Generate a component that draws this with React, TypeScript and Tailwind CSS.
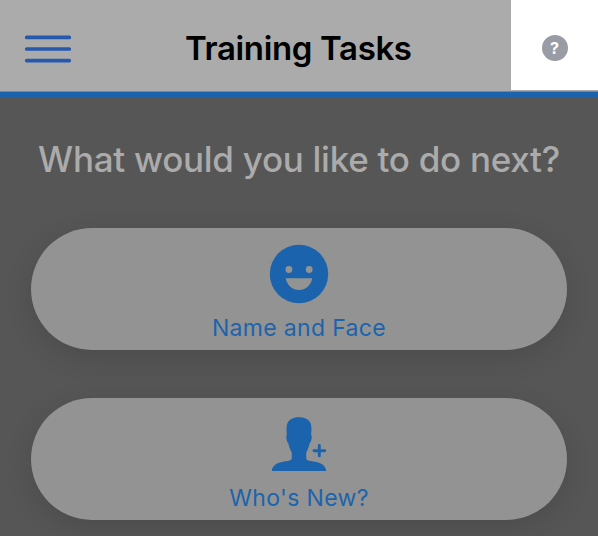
import type { ReactNode } from "react";

function MenuIcon() {
  return (
    <svg width="48" height="30" viewBox="0 0 48 30" stroke="#2658ad" strokeWidth="3.7" strokeLinecap="round">
      <path d="M2.7 3.4H45.3M2.7 15H45.3M2.7 26.6H45.3" />
    </svg>
  );
}

function SmileIcon() {
  return (
    <svg width="60" height="60" viewBox="0 0 60 60">
      <circle cx="30" cy="30" r="29.2" fill="#1b64ad" />
      <circle cx="19.9" cy="25.5" r="3.4" fill="#939393" />
      <circle cx="40.2" cy="25.5" r="3.4" fill="#939393" />
      <path d="M17.4 34.3H42.6Q43.4 34.3 43.1 35.3C41.5 41.7 36.5 46 30 46S18.500 41.700 16.900 35.300Q16.600 34.300 17.400 34.300Z" fill="#939393" />
    </svg>
  );
}

function AddPersonIcon() {
  return (
    <svg width="56" height="56" viewBox="0 0 56 56" fill="#1b64ad">
      <path d="M1 55V53.500C2 49 7 46.300 13 45.500C18 44.800 20.800 44.500 20.800 42V36.500C19 33.500 18 30 17.300 27.300C15.900 26 15 22 15.300 20C15.400 19.300 15.700 18.900 16 18.700C15.300 15 15.300 9 16.800 6.500C19 2.700 23 1.200 28 1.200S37 2.700 39.200 6.500C40.700 9 40.700 15 40 18.700C40.300 18.900 40.600 19.300 40.700 20C41 22 40.100 26 38.700 27.300C38 30 37 33.500 35.200 36.500V42C35.200 44.500 38 44.800 43 45.500C49 46.300 54 49 55 53.500V55Z" />
      <path d="M48.300 29.500V39.900M43 34.800H53.700" stroke="#1b64ad" strokeWidth="2.900" strokeLinecap="round" />
    </svg>
  );
}

function TaskButton({ icon, label }: { icon: ReactNode; label: ReactNode }) {
  return (
    <button className="flex h-[122px] w-[536px] shrink-0 flex-col items-center rounded-[61px] bg-[#939393] pt-4 text-[#1b64ad] shadow-[0_8px_28px_rgba(0,0,0,0.12)]">
      <span className="flex h-[60px] items-center">{icon}</span>
      {label}
    </button>
  );
}

export default function App() {
  return (
    <div className="flex h-[536px] w-[598px] flex-col overflow-hidden bg-[#565656] font-['Inter',sans-serif]">
      <header className="flex h-[98px] shrink-0 border-b-[6px] border-[#1b64ad] bg-[#ababab]">
        <div className="flex h-[92px] flex-1 items-center border-b border-[#858585] pt-[7px] pl-6">
          <MenuIcon />
          <h1 className="-mt-0.5 ml-[113px] whitespace-nowrap text-[33px] leading-10 font-semibold tracking-[-0.36px] text-black">Training Tasks</h1>
        </div>
        <div className="flex h-[92px] w-[87px] flex-col border-b border-[#858585]">
          <div className="flex h-[90px] items-center justify-center bg-white pt-[6px]">
            <span className="flex size-[26px] items-center justify-center rounded-full bg-[#9a9ca5] text-[16px] leading-none font-bold text-white">?</span>
          </div>
        </div>
      </header>
      <main className="flex flex-col items-center">
        <h2 className="mt-[39px] h-[91px] whitespace-nowrap text-[35px] leading-[44px] font-medium tracking-[-0.28px] text-[#ababab]">What would you like to do next?</h2>
        <div className="flex flex-col gap-12">
          <TaskButton icon={<SmileIcon />} label={<span className="mt-2 text-[23px] leading-8 tracking-[0.34px]">Name and Face</span>} />
          <TaskButton icon={<AddPersonIcon />} label={<span className="mt-2 text-[23px] leading-8 tracking-[0.34px]">Who's New?</span>} />
        </div>
      </main>
    </div>
  );
}
